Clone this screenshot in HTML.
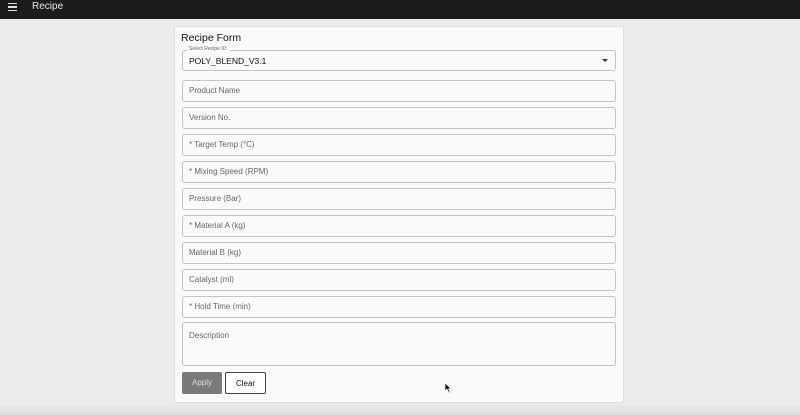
<!DOCTYPE html>
<html><head><style>
*{box-sizing:border-box;margin:0;padding:0}
body{width:800px;height:415px;background:#ebebeb;font-family:"Liberation Sans",sans-serif;position:relative;overflow:hidden}
.hdr{position:absolute;left:0;top:0;width:800px;height:19px;background:#1c1c1c;color:#e8e8e8}
.hdr .t{position:absolute;left:32px;top:1px;font-size:10px}
.hdr .m{position:absolute;left:8px;top:3px;width:9px}
.hdr .m i{display:block;height:1.3px;background:#ddd;margin-bottom:2px}
.card{position:absolute;left:174px;top:26px;width:450px;height:377px;background:#fafafa;border:1px solid #ddd;border-radius:2px}
.title{position:absolute;left:181px;top:32px;font-size:10.5px;color:#111}
.f{position:absolute;left:182px;width:434px;height:22px;border:1px solid #c4c4c4;border-radius:3px;background:#fafafa;font-size:8px;color:#666;padding:5px 0 0 6px}
.sel{top:50px;height:21px;color:#111;font-size:8.5px;padding-top:5px}
.lbl{position:absolute;left:187px;top:46px;font-size:5px;color:#666;background:#fafafa;padding:0 2px}
.arr{position:absolute;left:602px;top:59px;width:0;height:0;border-left:3px solid transparent;border-right:3px solid transparent;border-top:3px solid #333}
.btn{position:absolute;top:372px;height:22px;border-radius:2px;font-size:8px;text-align:center;line-height:22px}
.ap{left:182px;width:40px;background:#7a7a7a;color:#ddd}
.cl{left:225px;width:41px;border:1px solid #444;background:#fff;color:#111}
.bot{position:absolute;left:0;top:405px;width:800px;height:10px;background:linear-gradient(#e8e8e8,#dcdcdc)}
</style></head><body>
<div class="hdr"><div class="m"><i></i><i></i><i></i></div><div class="t">Recipe</div></div>
<div class="card"></div>
<div class="title">Recipe Form</div>
<div class="f sel">POLY_BLEND_V3.1</div>
<div class="lbl">Select Recipe ID:</div>
<div class="arr"></div>
<div class="f" style="top:80px">Product Name</div>
<div class="f" style="top:107px">Version No.</div>
<div class="f" style="top:134px">* Target Temp (°C)</div>
<div class="f" style="top:161px">* Mixing Speed (RPM)</div>
<div class="f" style="top:188px">Pressure (Bar)</div>
<div class="f" style="top:215px">* Material A (kg)</div>
<div class="f" style="top:242px">Material B (kg)</div>
<div class="f" style="top:269px">Catalyst (ml)</div>
<div class="f" style="top:296px">* Hold Time (min)</div>
<div class="f" style="top:322px;height:44px;padding-top:8px">Description</div>
<div class="btn ap">Apply</div>
<div class="btn cl">Clear</div>
<svg style="position:absolute;left:444px;top:382px" width="8" height="12" viewBox="0 0 8 12"><path d="M1 1 L1 9 L3 7 L5 11 L6 10.5 L4.5 6.8 L7 6.8 Z" fill="#111" stroke="#fff" stroke-width="0.6"/></svg>
<div class="bot"></div>
</body></html>
